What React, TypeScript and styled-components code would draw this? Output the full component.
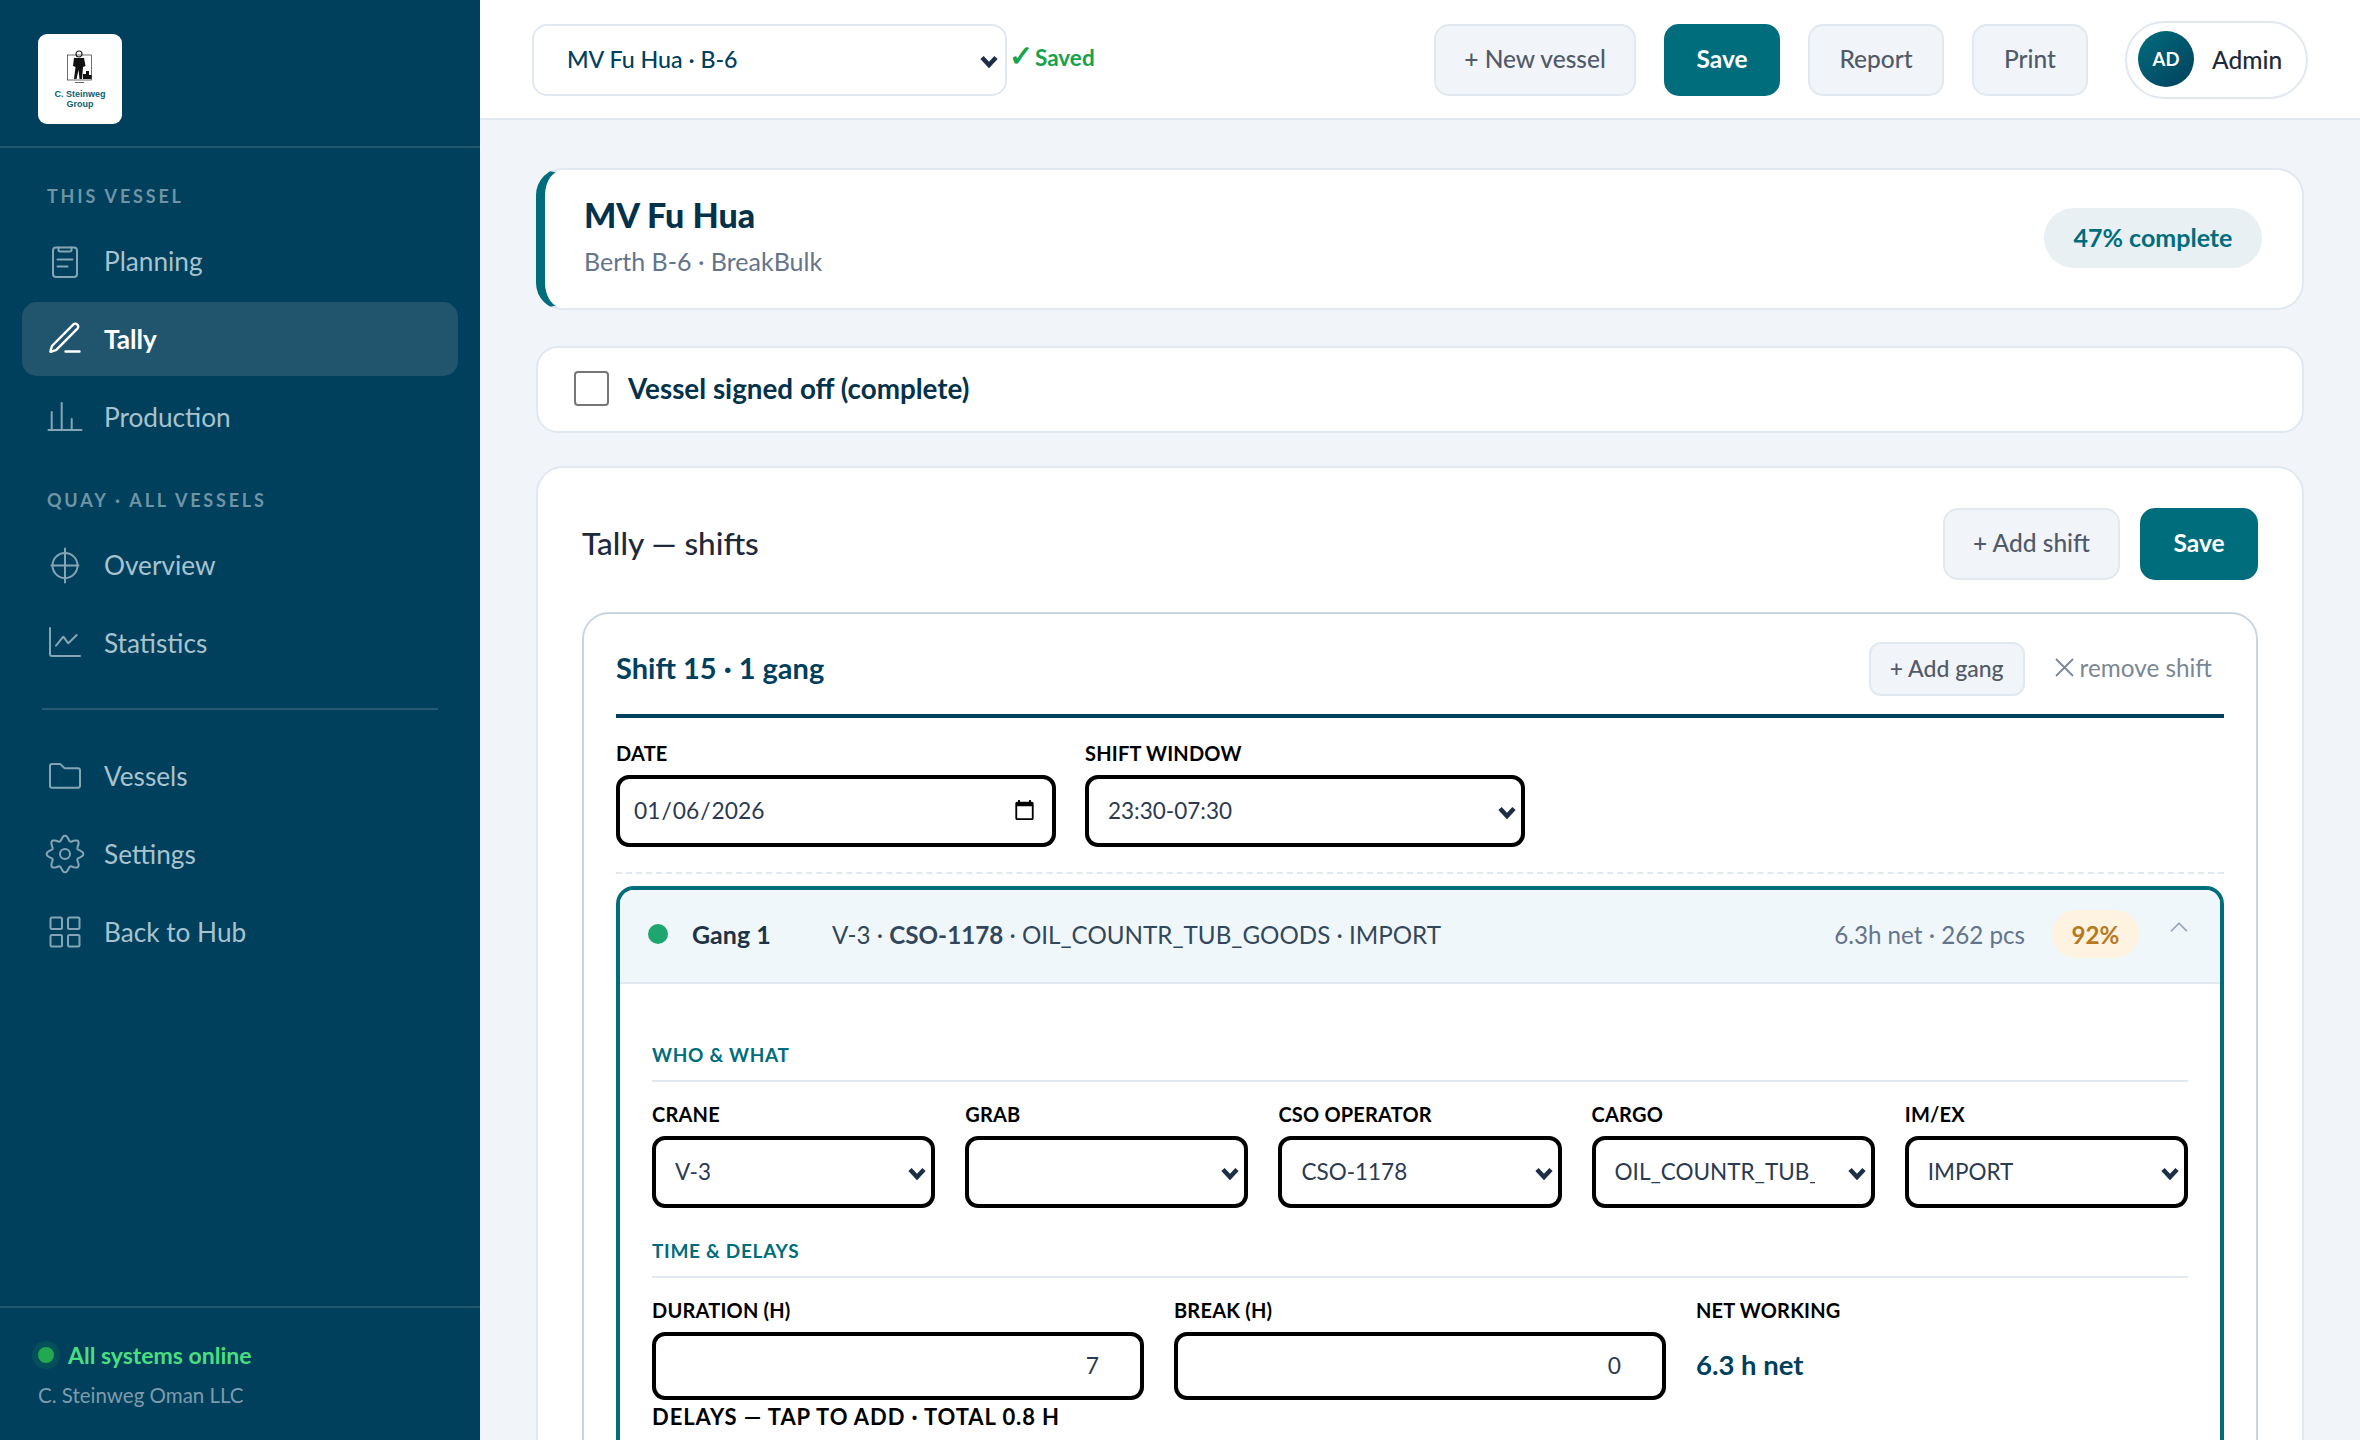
import React from 'react';
import styled, { createGlobalStyle } from 'styled-components';
import { ChevronUp } from 'lucide-react';

const navy = '#00405c';
const teal = '#006d7d';
const line = '#e2e8f0';
const font = '"Lato", "Noto Sans", sans-serif';

const GlobalStyle = createGlobalStyle`
  html, body {
    margin: 0;
    height: 100%;
    overflow: hidden;
    background: #f1f5f9;
    font-family: ${font};
  }
  * { box-sizing: border-box; }
`;

const Shell = styled.div`
  display: flex;
  height: 100vh;
  overflow: hidden;
`;

const Sidebar = styled.aside`
  width: 480px;
  flex-shrink: 0;
  background: ${navy};
  display: flex;
  flex-direction: column;
`;

const LogoRow = styled.div`
  padding: 34px 38px 22px;
  border-bottom: 2px solid rgba(255, 255, 255, 0.12);
`;

const LogoBox = styled.div`
  width: 84px;
  height: 90px;
  background: #fff;
  border-radius: 9px;
  display: flex;
  flex-direction: column;
  align-items: center;
  padding-top: 16px;
`;

const LogoText = styled.div`
  font-family: "Liberation Sans", sans-serif;
  font-size: 9px;
  font-weight: 700;
  line-height: 9.5px;
  color: #0b5f73;
  text-align: center;
  margin-top: 6px;
  white-space: nowrap;
`;

const NavArea = styled.nav`
  padding: 0 22px;
  display: flex;
  flex-direction: column;
  gap: 4px;
`;

const SectionLabel = styled.div<{ $top: number }>`
  margin: ${p => p.$top}px 0 11px 25px;
  height: 24px;
  line-height: 22px;
  font-size: 18px;
  font-weight: 700;
  letter-spacing: 2.8px;
  color: #6f94a6;
  white-space: nowrap;
`;

const NavItem = styled.a<{ $active?: boolean }>`
  height: 74px;
  display: flex;
  align-items: center;
  gap: 19px;
  padding-left: 23px;
  border-radius: 15px;
  font-size: 26.2px;
  font-weight: ${p => (p.$active ? 700 : 400)};
  color: ${p => (p.$active ? '#fff' : '#a8c3d0')};
  background: ${p => (p.$active ? '#21556d' : 'transparent')};

  svg {
    flex-shrink: 0;
    width: 40px;
    height: 40px;
    fill: none;
    stroke: ${p => (p.$active ? '#fff' : '#85a5b6')};
    stroke-width: ${p => (p.$active ? 2.4 : 2)};
    stroke-linecap: round;
    stroke-linejoin: round;
  }
`;

const NavRule = styled.div`
  height: 2px;
  margin: 24px 20px 25px;
  background: rgba(255, 255, 255, 0.14);
`;

const SideFooter = styled.div`
  margin-top: auto;
  height: 134px;
  border-top: 2px solid rgba(255, 255, 255, 0.12);
  padding: 32px 38px 0;
`;

const Online = styled.div`
  display: flex;
  align-items: center;
  gap: 14px;
  font-size: 23px;
  font-weight: 700;
  line-height: 30px;
  color: #4ade80;
`;

const OnlineDot = styled.span`
  width: 16px;
  height: 16px;
  border-radius: 50%;
  background: #22a84f;
  box-shadow: 0 0 0 6px rgba(34, 168, 79, 0.15);
`;

const Company = styled.div`
  margin-top: 10px;
  font-size: 20.5px;
  line-height: 30px;
  color: #7d9bad;
`;

const Main = styled.main`
  flex: 1;
  min-width: 0;
  display: flex;
  flex-direction: column;
`;

const Topbar = styled.header`
  height: 120px;
  flex-shrink: 0;
  background: #fff;
  border-bottom: 2px solid ${line};
  display: flex;
  align-items: center;
  padding: 2px 52px 0 52px;
`;

const SelectWrap = styled.div<{ $width?: number }>`
  position: relative;
  width: ${p => (p.$width ? `${p.$width}px` : 'auto')};
  color: #1e2f45;
`;

const VesselSelect = styled.select`
  appearance: none;
  width: 100%;
  height: 72px;
  padding: 0 50px 2px 33px;
  border: 2px solid ${line};
  border-radius: 15px;
  background: #fff;
  font-family: ${font};
  font-size: 23.2px;
  font-weight: 500;
  color: ${navy};
  outline: none;
`;

const FieldSelect = styled.select`
  appearance: none;
  width: 100%;
  height: 72px;
  padding: 0 56px 2px 19px;
  border: 4.5px solid #000;
  border-radius: 13px;
  background: #fff;
  font-family: ${font};
  font-size: 22.5px;
  color: #2b3a50;
  outline: none;
`;

const Arrow = styled.svg`
  position: absolute;
  right: 9px;
  top: 50%;
  width: 18px;
  height: 13px;
  margin-top: -5px;
  fill: none;
  stroke: currentColor;
  stroke-width: 4.5;
  pointer-events: none;
`;

const Saved = styled.span`
  margin: -6px 0 0 2px;
  font-size: 22.5px;
  font-weight: 700;
  color: #16a34a;
  white-space: nowrap;
`;

const SavedCheck = styled.span`
  font-size: 29px;
  line-height: 0;
  margin-right: 2px;
`;

const TopActions = styled.div`
  margin-left: auto;
  display: flex;
  align-items: center;
  gap: 28px;
`;

const Button = styled.button<{ $w: number; $primary?: boolean }>`
  width: ${p => p.$w}px;
  height: 72px;
  padding: 0 0 3px;
  border-radius: 15px;
  border: 2px solid ${p => (p.$primary ? teal : line)};
  background: ${p => (p.$primary ? teal : '#f1f5f9')};
  color: ${p => (p.$primary ? '#fff' : '#525a68')};
  font-family: ${font};
  font-size: 24.5px;
  font-weight: ${p => (p.$primary ? 700 : 500)};
  white-space: nowrap;
`;

const UserPill = styled.div`
  width: 183px;
  height: 78px;
  margin-left: 9px;
  padding: 0 0 2px 11px;
  border: 2px solid ${line};
  border-radius: 39px;
  display: flex;
  align-items: center;
  gap: 18px;
  font-size: 24.5px;
  font-weight: 500;
  color: #1e293b;
`;

const Avatar = styled.div`
  width: 56px;
  height: 56px;
  border-radius: 50%;
  background: linear-gradient(135deg, ${teal}, ${navy});
  color: #fff;
  font-size: 18.5px;
  font-weight: 700;
  display: flex;
  align-items: center;
  justify-content: center;
`;

const Content = styled.div`
  flex: 1;
  min-height: 0;
  overflow: hidden;
  padding: 48px 56px 0 56px;
`;

const Card = styled.section<{ $radius?: number; $mb?: number }>`
  background: #fff;
  border: 2px solid ${line};
  border-radius: ${p => p.$radius ?? 27}px;
  margin-bottom: ${p => p.$mb ?? 0}px;
`;

const VesselCard = styled(Card)`
  height: 142px;
  border-left: 9px solid ${teal};
  display: flex;
  align-items: center;
  justify-content: space-between;
  padding: 0 40px 2px 39px;
`;

const VesselInfo = styled.div`
  padding-bottom: 7px;
`;

const VesselName = styled.h1`
  margin: 0;
  font-size: 34px;
  line-height: 44px;
  font-weight: 900;
  color: #04324a;
`;

const VesselSub = styled.div`
  margin-top: 9px;
  font-size: 25px;
  line-height: 30px;
  color: #64748b;
`;

const ProgressPill = styled.div`
  height: 60px;
  width: 218px;
  padding-bottom: 2px;
  border-radius: 30px;
  background: #e8f0f4;
  color: ${teal};
  font-size: 25px;
  font-weight: 700;
  display: flex;
  align-items: center;
  justify-content: center;
`;

const SignOffCard = styled(Card)`
  height: 87px;
  display: flex;
  align-items: center;
  gap: 19px;
  padding: 0 0 2px 36px;
`;

const SignOffBox = styled.input`
  appearance: none;
  width: 35px;
  height: 35px;
  margin: 0;
  border: 2px solid #767676;
  border-radius: 4px;
  background: #fff;
`;

const SignOffText = styled.span`
  font-size: 27.8px;
  font-weight: 700;
  color: #04324a;
`;

const ShiftsCard = styled(Card)`
  padding: 40px 44px 0 44px;
`;

const ShiftsHead = styled.div`
  height: 72px;
  display: flex;
  align-items: center;
  gap: 20px;
  margin-bottom: 32px;
`;

const ShiftsTitle = styled.h2`
  margin: -3px auto 0 0;
  font-size: 31.5px;
  font-weight: 500;
  color: #1e293b;
`;

const ShiftBox = styled.div`
  border: 2px solid #cbd5e1;
  border-radius: 27px;
  padding: 28px 32px 0;
`;

const ShiftHead = styled.div`
  display: flex;
  align-items: center;
  padding-bottom: 18px;
  border-bottom: 4.5px solid ${navy};
`;

const ShiftTitle = styled.h3`
  margin: -4px auto 0 0;
  font-size: 29px;
  font-weight: 700;
  color: ${navy};
`;

const SmallButton = styled.button`
  width: 156px;
  height: 54px;
  margin-right: 1px;
  padding: 0 0 2px;
  border: 2px solid ${line};
  border-radius: 12px;
  background: #f1f5f9;
  color: #525a68;
  font-family: ${font};
  font-size: 23px;
  font-weight: 500;
`;

const RemoveLink = styled.span`
  display: flex;
  align-items: center;
  gap: 6px;
  margin: -3px 12px 0 29px;
  font-size: 24.3px;
  color: #7b8794;
  white-space: nowrap;
`;

const RemoveX = styled.svg`
  width: 19px;
  height: 19px;
  fill: none;
  stroke: currentColor;
  stroke-width: 1.8;
`;

const ShiftFields = styled.div`
  display: grid;
  grid-template-columns: repeat(2, 439.5px);
  gap: 29.5px;
  padding: 23px 0 25px;
  border-bottom: 2px dashed ${line};
`;

const FieldLabel = styled.label`
  display: block;
  height: 26px;
  line-height: 24px;
  margin-bottom: 8px;
  font-size: 20px;
  font-weight: 700;
  letter-spacing: 0.2px;
  color: #000;
  text-transform: uppercase;
  white-space: nowrap;
`;

const DateInput = styled.input`
  width: 100%;
  height: 72px;
  padding: 0 14px 2px 13px;
  border: 4.5px solid #000;
  border-radius: 13px;
  background: #fff;
  font-family: ${font};
  font-size: 22.8px;
  color: #2b3a50;
  outline: none;
`;

const NumberInput = styled.input`
  width: 100%;
  height: 68px;
  padding: 0 41px 2px 14px;
  border: 4.5px solid #000;
  border-radius: 13px;
  background: #fff;
  font-family: ${font};
  font-size: 22.8px;
  color: #2b3a50;
  text-align: right;
  outline: none;
`;

const GangBox = styled.div`
  margin-top: 12px;
  border: 4.5px solid ${teal};
  border-radius: 18px;
  overflow: hidden;
`;

const GangHead = styled.div`
  height: 94px;
  display: flex;
  align-items: center;
  padding: 0 26px 4px 28px;
  background: #f0f7fa;
  border-bottom: 2px solid ${line};
  font-size: 24.2px;
  color: #33475b;
`;

const GangDot = styled.span`
  width: 20px;
  height: 20px;
  border-radius: 50%;
  background: #1fa56f;
  margin-right: 24px;
`;

const GangName = styled.strong`
  width: 140px;
  font-size: 25px;
  font-weight: 700;
  color: #1e3345;
`;

const GangStats = styled.span`
  margin-left: auto;
  color: #64748b;
`;

const RatePill = styled.span`
  width: 87px;
  height: 48px;
  margin: 0 25px 0 27px;
  border-radius: 24px;
  background: #fdf3e0;
  color: #b7791f;
  font-weight: 700;
  display: flex;
  align-items: center;
  justify-content: center;
`;

const Collapse = styled(ChevronUp)`
  width: 30px;
  height: 30px;
  margin-top: -14px;
  color: #94a3b8;
  stroke-width: 1.4;
`;

const GangBody = styled.div`
  padding: 58px 32px 220px 32px;
`;

const GroupTitle = styled.div`
  height: 40px;
  line-height: 26px;
  margin-bottom: 20px;
  border-bottom: 2px solid ${line};
  font-size: 19px;
  font-weight: 700;
  letter-spacing: 0.7px;
  color: ${teal};
  text-transform: uppercase;
`;

const FiveCols = styled.div`
  display: grid;
  grid-template-columns: repeat(5, 1fr);
  gap: 30px;
  margin-bottom: 30px;
`;

const ThreeCols = styled.div`
  display: grid;
  grid-template-columns: repeat(3, 1fr);
  gap: 30px;
`;

const NetValue = styled.div`
  height: 68px;
  padding-bottom: 3px;
  display: flex;
  align-items: center;
  font-size: 27.5px;
  font-weight: 700;
  color: ${navy};
`;

const DelaysLabel = styled.div`
  margin-top: 4px;
  height: 26px;
  line-height: 26px;
  font-size: 22px;
  font-weight: 700;
  letter-spacing: 0.9px;
  color: #000;
  text-transform: uppercase;
  white-space: nowrap;
`;

const Chevron = () => (
  <Arrow viewBox="0 0 18 13">
    <path d="M2 2.5 L9 10 L16 2.5" />
  </Arrow>
);

const Choice = ({ value, width, as: Comp = FieldSelect }: { value: string; width?: number; as?: any }) => (
  <SelectWrap $width={width}>
    <Comp defaultValue={value}>
      <option value={value}>{value}</option>
    </Comp>
    <Chevron />
  </SelectWrap>
);

const gearPath = Array.from({ length: 96 }, (_, i) => {
  const t = (i / 96) * Math.PI * 2;
  const r = 15.9 + 2.5 * Math.cos(t * 8);
  return `${(20 + r * Math.sin(t)).toFixed(2)} ${(20 - r * Math.cos(t)).toFixed(2)}`;
}).join(' L');

const icons = {
  planning: (
    <svg viewBox="0 0 40 40">
      <rect x="8" y="6.5" width="24" height="29.5" rx="3" />
      <path d="M13.5 6.5v2.5a1.5 1.5 0 0 0 1.5 1.5h10a1.5 1.5 0 0 0 1.5-1.5V6.5M12.5 18.5h15M12.5 25.5h10" />
    </svg>
  ),
  tally: (
    <svg viewBox="0 0 40 40">
      <path d="M28.2 5.6a2.9 2.9 0 0 1 4.2 4.1L11.6 30.6a2 2 0 0 1-.8.5l-4.6 1.6a.6.6 0 0 1-.8-.8l1.5-4.6a2 2 0 0 1 .5-.8zM20.5 32.5h14" />
    </svg>
  ),
  production: (
    <svg viewBox="0 0 40 40">
      <path d="M3.5 33h33M6.7 33V15M16.7 33V6M26.7 33V22" />
    </svg>
  ),
  overview: (
    <svg viewBox="0 0 40 40">
      <circle cx="20" cy="20.5" r="12.5" />
      <path d="M20 3.5v34M6.5 20.5h27" />
    </svg>
  ),
  statistics: (
    <svg viewBox="0 0 40 40">
      <path d="M5 5v26a2 2 0 0 0 2 2h28M11 22.7l7.3-9 5 6.6 8.4-8.3" />
    </svg>
  ),
  vessels: (
    <svg viewBox="0 0 40 40">
      <path d="M5 10a2 2 0 0 1 2-2h7.5a2 2 0 0 1 1.4.6l3 3a2 2 0 0 0 1.4.6H33a2 2 0 0 1 2 2v15.5a2 2 0 0 1-2 2H7a2 2 0 0 1-2-2z" />
    </svg>
  ),
  settings: (
    <svg viewBox="0 0 40 40">
      <path d={`M${gearPath}Z`} />
      <circle cx="20" cy="20" r="5" />
    </svg>
  ),
  hub: (
    <svg viewBox="0 0 40 40">
      <rect x="5.5" y="5.5" width="11.5" height="11.5" rx="1.5" />
      <rect x="23" y="5.5" width="11.5" height="11.5" rx="1.5" />
      <rect x="5.5" y="23" width="11.5" height="11.5" rx="1.5" />
      <rect x="23" y="23" width="11.5" height="11.5" rx="1.5" />
    </svg>
  ),
};

const LogoMark = () => (
  <svg width="28" height="34" viewBox="0 0 28 34">
    <rect x="1.5" y="5" width="24" height="25" fill="none" stroke="#333" strokeWidth="0.7" />
    <circle cx="13" cy="4" r="3" fill="none" stroke="#222" strokeWidth="1.2" />
    <path d="M8 8h10l1.5 8-2.5 1-1 12h-2.5l-1-9-2 9H8l1.5-12-2.5-1z" fill="#111" />
    <path d="M17 24h3v-3h3v4h2.5v4H17z" fill="#111" />
    <path d="M9 32.5h9" stroke="#666" strokeWidth="1" />
  </svg>
);

export default function App() {
  return (
    <Shell>
      <GlobalStyle />
      <Sidebar>
        <LogoRow>
          <LogoBox>
            <LogoMark />
            <LogoText>
              C. Steinweg
              <br />
              Group
            </LogoText>
          </LogoBox>
        </LogoRow>
        <NavArea>
          <SectionLabel $top={37}>THIS VESSEL</SectionLabel>
          <NavItem>{icons.planning}Planning</NavItem>
          <NavItem $active>{icons.tally}Tally</NavItem>
          <NavItem>{icons.production}Production</NavItem>
          <SectionLabel $top={31}>QUAY · ALL VESSELS</SectionLabel>
          <NavItem>{icons.overview}Overview</NavItem>
          <NavItem>{icons.statistics}Statistics</NavItem>
          <NavRule />
          <NavItem>{icons.vessels}Vessels</NavItem>
          <NavItem>{icons.settings}Settings</NavItem>
          <NavItem>{icons.hub}Back to Hub</NavItem>
        </NavArea>
        <SideFooter>
          <Online>
            <OnlineDot />
            All systems online
          </Online>
          <Company>C. Steinweg Oman LLC</Company>
        </SideFooter>
      </Sidebar>

      <Main>
        <Topbar>
          <Choice value="MV Fu Hua · B-6" width={475} as={VesselSelect} />
          <Saved>
            <SavedCheck>✓</SavedCheck>Saved
          </Saved>
          <TopActions>
            <Button $w={202}>+ New vessel</Button>
            <Button $w={116} $primary>Save</Button>
            <Button $w={136}>Report</Button>
            <Button $w={116}>Print</Button>
            <UserPill>
              <Avatar>AD</Avatar>
              Admin
            </UserPill>
          </TopActions>
        </Topbar>

        <Content>
          <VesselCard $mb={36}>
            <VesselInfo>
              <VesselName>MV Fu Hua</VesselName>
              <VesselSub>Berth B-6 · BreakBulk</VesselSub>
            </VesselInfo>
            <ProgressPill>47% complete</ProgressPill>
          </VesselCard>

          <SignOffCard $radius={22} $mb={33}>
            <SignOffBox type="checkbox" />
            <SignOffText>Vessel signed off (complete)</SignOffText>
          </SignOffCard>

          <ShiftsCard>
            <ShiftsHead>
              <ShiftsTitle>Tally — shifts</ShiftsTitle>
              <Button $w={177}>+ Add shift</Button>
              <Button $w={118} $primary>Save</Button>
            </ShiftsHead>

            <ShiftBox>
              <ShiftHead>
                <ShiftTitle>Shift 15 · 1 gang</ShiftTitle>
                <SmallButton>+ Add gang</SmallButton>
                <RemoveLink>
                  <RemoveX viewBox="0 0 19 19">
                    <path d="M1 1 L18 18 M18 1 L1 18" />
                  </RemoveX>
                  remove shift
                </RemoveLink>
              </ShiftHead>

              <ShiftFields>
                <div>
                  <FieldLabel>Date</FieldLabel>
                  <DateInput type="date" defaultValue="2026-01-06" />
                </div>
                <div>
                  <FieldLabel>Shift window</FieldLabel>
                  <Choice value="23:30-07:30" />
                </div>
              </ShiftFields>

              <GangBox>
                <GangHead>
                  <GangDot />
                  <GangName>Gang 1</GangName>
                  <span>
                    V-3 · <strong>CSO-1178</strong> · OIL_COUNTR_TUB_GOODS · IMPORT
                  </span>
                  <GangStats>6.3h net · 262 pcs</GangStats>
                  <RatePill>92%</RatePill>
                  <Collapse />
                </GangHead>

                <GangBody>
                  <GroupTitle>Who &amp; what</GroupTitle>
                  <FiveCols>
                    <div>
                      <FieldLabel>Crane</FieldLabel>
                      <Choice value="V-3" />
                    </div>
                    <div>
                      <FieldLabel>Grab</FieldLabel>
                      <Choice value="" />
                    </div>
                    <div>
                      <FieldLabel>CSO operator</FieldLabel>
                      <Choice value="CSO-1178" />
                    </div>
                    <div>
                      <FieldLabel>Cargo</FieldLabel>
                      <Choice value="OIL_COUNTR_TUB_GOODS" />
                    </div>
                    <div>
                      <FieldLabel>Im/Ex</FieldLabel>
                      <Choice value="IMPORT" />
                    </div>
                  </FiveCols>

                  <GroupTitle>Time &amp; delays</GroupTitle>
                  <ThreeCols>
                    <div>
                      <FieldLabel>Duration (h)</FieldLabel>
                      <NumberInput type="text" defaultValue="7" />
                    </div>
                    <div>
                      <FieldLabel>Break (h)</FieldLabel>
                      <NumberInput type="text" defaultValue="0" />
                    </div>
                    <div>
                      <FieldLabel>Net working</FieldLabel>
                      <NetValue>6.3 h net</NetValue>
                    </div>
                  </ThreeCols>
                  <DelaysLabel>Delays — tap to add · total 0.8 h</DelaysLabel>
                </GangBody>
              </GangBox>
            </ShiftBox>
          </ShiftsCard>
        </Content>
      </Main>
    </Shell>
  );
}
